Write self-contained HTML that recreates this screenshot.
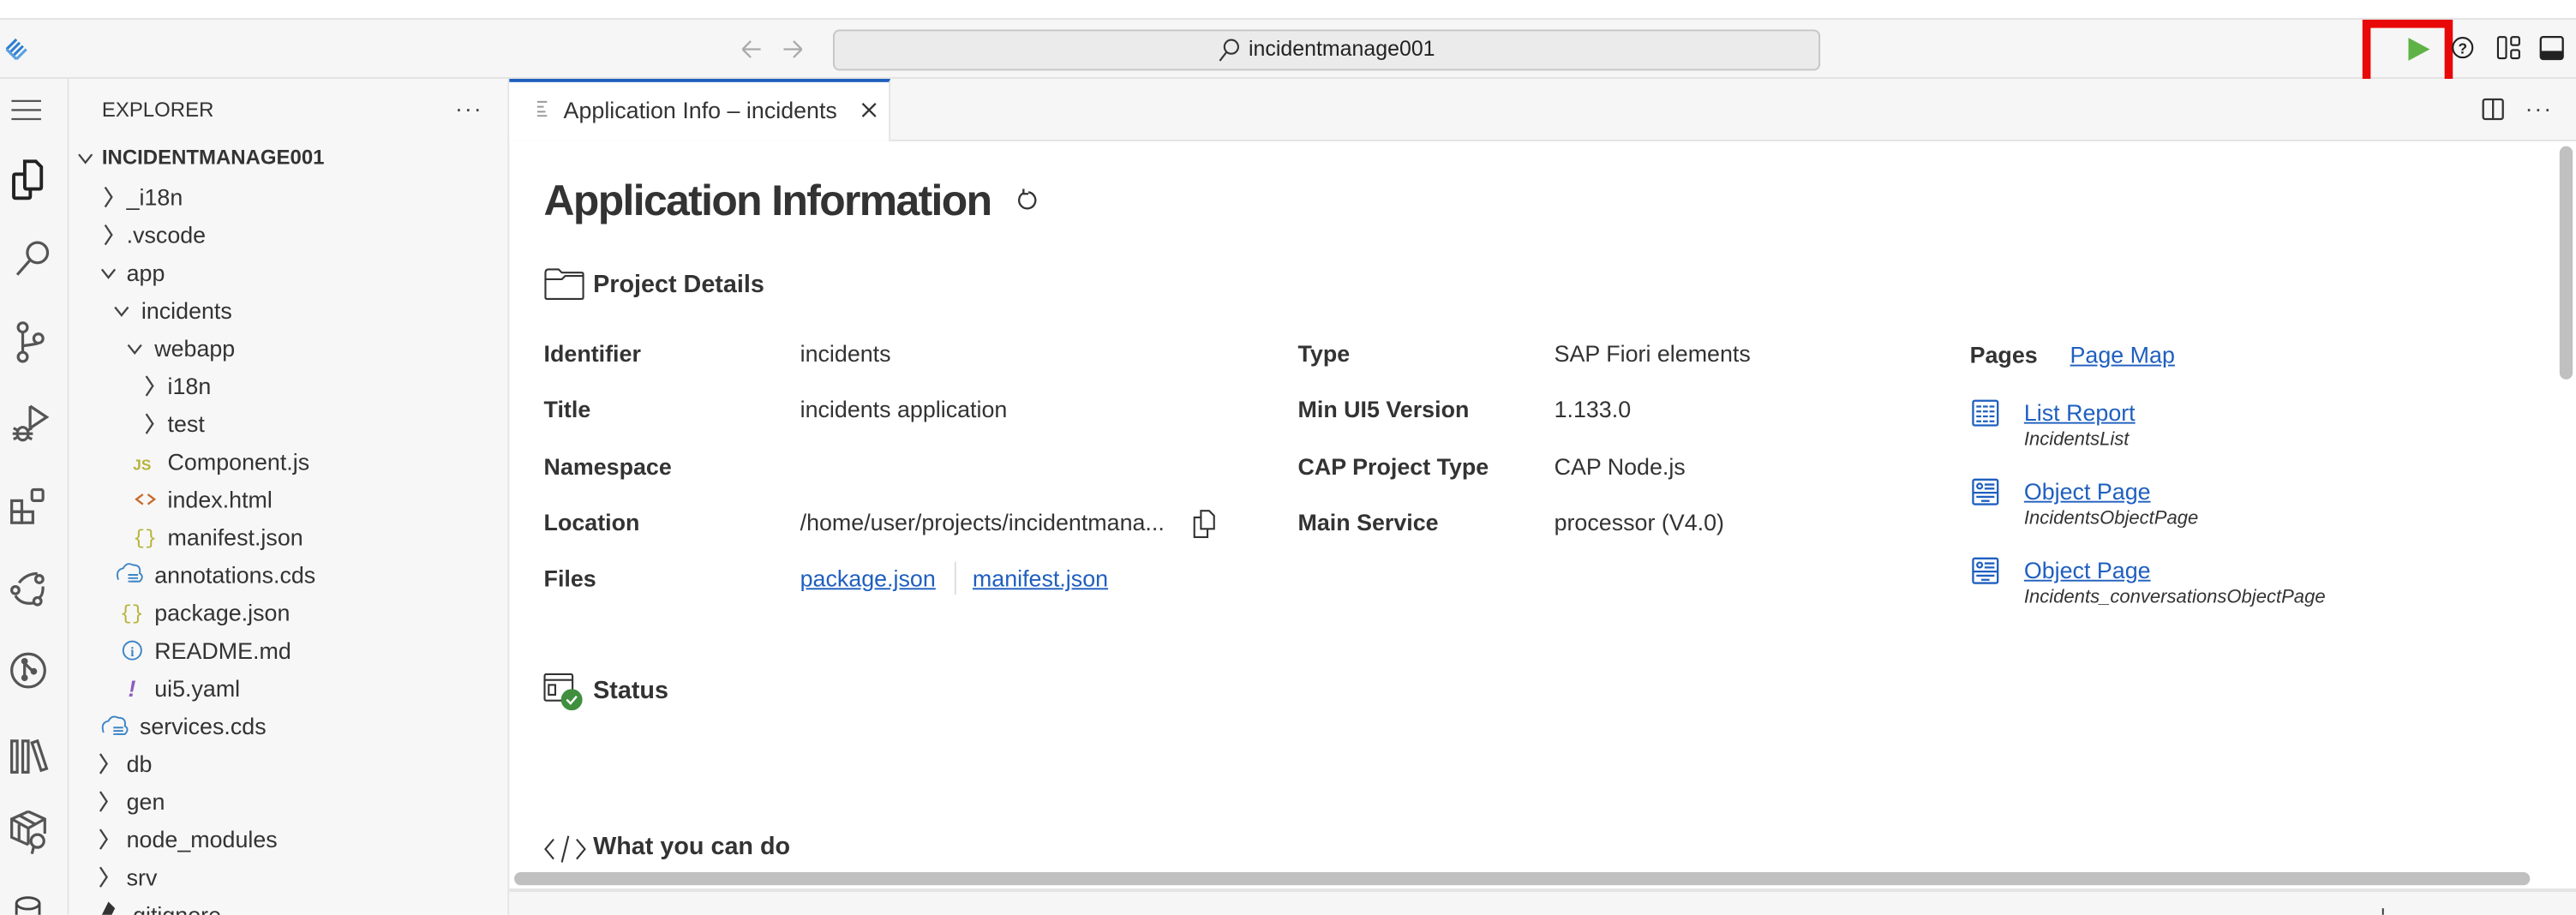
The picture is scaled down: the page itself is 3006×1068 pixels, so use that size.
<!DOCTYPE html>
<html><head><meta charset="utf-8">
<style>
html,body{margin:0;padding:0;width:3006px;height:1068px;overflow:hidden;background:#fff}
#w{position:absolute;left:0;top:0;width:1568px;height:557px;transform:scale(1.91709);transform-origin:0 0;font-family:"Liberation Sans",sans-serif;color:#333;overflow:hidden}
.a{position:absolute;white-space:nowrap}
.t{position:absolute;white-space:nowrap;font-size:14px;line-height:18px;color:#333}
.lb{position:absolute;white-space:nowrap;font-size:14px;font-weight:bold;line-height:18px;color:#333}
.v{position:absolute;white-space:nowrap;font-size:14px;line-height:18px;color:#333}
.lk{color:#1f5fbf;text-decoration:underline}
svg{position:absolute;overflow:visible}
</style></head><body><div id="w">
<div class="a" style="left:0;top:0;width:1568px;height:11px;background:#fff;border-bottom:1px solid #e2e2e2"></div>
<div class="a" style="left:0;top:12px;width:1568px;height:35px;background:#f6f6f6;border-bottom:1px solid #e2e2e2"></div>
<svg style="left:2px;top:21px" width="18" height="18" viewBox="0 0 18 18"><g stroke="#2f7fd0" stroke-width="1.6" fill="none"><path d="M2 9 L8 3 M4 11 L10 5 M6 13 L12 7"/><path d="M8 15 L14 9 M2 9 L8 15" stroke="#5aa0e0"/></g></svg>
<svg style="left:450px;top:23px" width="40" height="14"><g stroke="#aaa" stroke-width="1.2" fill="none"><path d="M2 7 H13 M2 7 L7 2 M2 7 L7 12"/><path d="M27 7 H38 M38 7 L33 2 M38 7 L33 12"/></g></svg>
<div class="a" style="left:507px;top:18px;width:599px;height:23px;background:#ebebeb;border:1px solid #c6c6c6;border-radius:4px"></div>
<svg style="left:741px;top:23px" width="14" height="15"><circle cx="8.5" cy="5.5" r="4.2" stroke="#333" stroke-width="1.1" fill="none"/><path d="M5.5 8.8 L1.5 14" stroke="#333" stroke-width="1.1"/></svg>
<div class="a" style="left:760px;top:22px;font-size:13px;line-height:16px;color:#222">incidentmanage001</div>
<div class="a" style="left:1438px;top:12px;width:45px;height:32px;border:5px solid #e80808"></div>
<svg style="left:1466px;top:23px" width="13" height="14"><path d="M0 0 L13 7 L0 14Z" fill="#5fb246"/></svg>
<svg style="left:1492px;top:22px" width="14" height="14"><circle cx="7" cy="7" r="6" stroke="#222" stroke-width="1.1" fill="none"/><text x="7" y="10.5" font-size="9" font-weight="bold" text-anchor="middle" fill="#222" font-family="Liberation Sans">?</text></svg>
<svg style="left:1520px;top:22px" width="15" height="15"><g stroke="#222" stroke-width="1.1" fill="none"><rect x="0.5" y="0.5" width="5" height="13" rx="1"/><rect x="8.5" y="0.5" width="5" height="5" rx="1"/><rect x="8.5" y="8.5" width="5" height="5" rx="1"/></g></svg>
<svg style="left:1546px;top:22px" width="15" height="15"><rect x="0.5" y="0.5" width="13.5" height="13.5" rx="1.5" stroke="#222" stroke-width="1.2" fill="none"/><rect x="0.5" y="9" width="13.5" height="5" fill="#222"/></svg>

<div class="a" style="left:0;top:48px;width:41px;height:509px;background:#f6f6f6;border-right:1px solid #e4e4e4"></div>
<svg style="left:7px;top:60px" width="20" height="14"><g stroke="#555" stroke-width="1.2"><path d="M0 1.5H18M0 7H18M0 12.5H18"/></g></svg>
<svg style="left:5px;top:96px" width="24" height="28"><g stroke="#222" stroke-width="1.8" fill="none" transform="scale(1.12)"><path d="M9 2 H15 L18 5 V16 Q18 17 17 17 H10 Q9 17 9 16Z"/><path d="M9 9 H4 Q3 9 3 10 V21 Q3 22 4 22 H11 Q12 22 12 21 V17"/></g></svg>
<svg style="left:6px;top:146px" width="24" height="26"><g stroke="#555" stroke-width="1.5" fill="none" transform="scale(1.12)"><circle cx="15" cy="7" r="5.5"/><path d="M11 11 L4 19"/></g></svg>
<svg style="left:6px;top:196px" width="24" height="28"><g stroke="#555" stroke-width="1.5" fill="none" transform="scale(1.12)"><circle cx="7" cy="3" r="2.5"/><circle cx="7" cy="19" r="2.5"/><circle cx="15.5" cy="9" r="2.5"/><path d="M7 5.5 V16.5 M7 13 Q15 12 15.5 11.5"/></g></svg>
<svg style="left:6px;top:245px" width="26" height="26"><g stroke="#555" stroke-width="1.5" fill="none" transform="scale(1.12)"><path d="M11 2 V14 M11 2 L20 8 L11 14"/><ellipse cx="7" cy="17" rx="3" ry="3.5"/><path d="M2 14 L4 15 M2 20 L4 19 M12 14 L10 15 M12 20 L10 19 M1.5 17 H12.5"/></g></svg>
<svg style="left:6px;top:297px" width="24" height="24"><g stroke="#555" stroke-width="1.5" fill="none" transform="scale(1.12)"><rect x="1" y="7" width="5.5" height="6"/><rect x="1" y="13" width="5.5" height="6"/><rect x="6.5" y="13" width="6" height="6"/><rect x="12" y="1" width="6" height="6" rx="1"/></g></svg>
<svg style="left:6px;top:347px" width="24" height="24"><g stroke="#555" stroke-width="1.5" fill="none" transform="scale(1.12)"><path d="M5 7 Q9 2 15 2 M18 9 Q18 14 16 15 M13 18 Q6 19 3 14"/><circle cx="16" cy="5" r="2"/><circle cx="3" cy="11" r="2"/><circle cx="15" cy="17" r="2"/></g></svg>
<svg style="left:6px;top:397px" width="24" height="24"><g transform="scale(1.12)"><g stroke="#555" stroke-width="1.5" fill="none"><circle cx="10" cy="10" r="9"/><path d="M8 5 V14 M8 6 L12 10"/></g><circle cx="8" cy="5" r="1.8" fill="#555"/><circle cx="8" cy="14" r="1.8" fill="#555"/><circle cx="13" cy="10.5" r="1.8" fill="#555"/></g></svg>
<svg style="left:6px;top:450px" width="24" height="22"><g stroke="#555" stroke-width="1.5" fill="none" transform="scale(1.12)"><rect x="1" y="1" width="3" height="17"/><rect x="7" y="1" width="3" height="17"/><path d="M12 2 L15 1 L20 16 L17 17Z"/></g></svg>
<svg style="left:6px;top:493px" width="24" height="30"><g stroke="#555" stroke-width="1.5" fill="none" transform="scale(1.12)"><path d="M10 1 L19 5 V13 M10 1 L1 5 V15 L10 19 M1 5 L10 10 L19 5 M10 10 V19 M5 3 L14 8 M5 8 V17"/><circle cx="15" cy="17" r="3.5"/><path d="M13 20 L12 24"/></g></svg>
<svg style="left:9px;top:545px" width="18" height="12"><ellipse cx="8" cy="5" rx="7" ry="3.5" stroke="#444" stroke-width="1.5" fill="none"/><path d="M1 5 V12 M15 5 V12" stroke="#444" stroke-width="1.5"/></svg>

<div class="a" style="left:42px;top:48px;width:267px;height:509px;background:#f7f7f7;border-right:1px solid #e4e4e4"></div>
<div class="a" style="left:62px;top:60px;font-size:12.5px;color:#333">EXPLORER</div>
<div class="a" style="left:277px;top:58px;font-size:14px;color:#444;letter-spacing:1px">···</div>
<svg style="left:47px;top:93px" width="10" height="8"><path d="M1 1 L5 6 L9 1" stroke="#444" stroke-width="1.2" fill="none"/></svg>
<div class="a" style="left:62px;top:89px;font-size:12.5px;font-weight:bold;color:#333">INCIDENTMANAGE001</div>

<svg style="left:0;top:0" width="310" height="557"><g stroke="#444" stroke-width="1.2" fill="none">
<path d="M64 114 L68 120 L64 126"/><path d="M64 137 L68 143 L64 149"/><path d="M62 164 L66 169 L70 164"/>
<path d="M70 187 L74 192 L78 187"/><path d="M78 210 L82 215 L86 210"/>
<path d="M89 229 L93 235 L89 241"/><path d="M89 252 L93 258 L89 264"/>
<path d="M61 459 L65 465 L61 471"/><path d="M61 482 L65 488 L61 494"/><path d="M61 505 L65 511 L61 517"/><path d="M61 528 L65 534 L61 540"/>
</g>
<text x="81" y="286" font-size="9" font-weight="bold" fill="#b6b43a" font-family="Liberation Sans">JS</text>
<path d="M87 301 L83 304 L87 307 M90 301 L94 304 L90 307" stroke="#c86a2a" stroke-width="1.2" fill="none"/>
<text x="81" y="331" font-size="12" fill="#b6b43a" font-family="Liberation Mono">{}</text>
<text x="73" y="377" font-size="12" fill="#b6b43a" font-family="Liberation Mono">{}</text>
<circle cx="80.5" cy="396" r="5.5" stroke="#3d85c6" stroke-width="1" fill="none"/><text x="80.5" y="399.5" font-size="8" text-anchor="middle" fill="#3d85c6" font-family="Liberation Serif" font-weight="bold">i</text>
<text x="78" y="424" font-size="14" font-style="italic" font-weight="bold" fill="#8e5bc0" font-family="Liberation Sans">!</text>
<g stroke="#3d85c6" stroke-width="1" fill="none"><path d="M72 353 Q70 347 75 346 Q77 342 81 344 Q86 344 85 349 Q88 351 85 354 H80"/><path d="M78 350 H84 M78 352 H84 M78 354 H84"/>
<path d="M63 446 Q61 440 66 439 Q68 435 72 437 Q77 437 76 442 Q79 444 76 447 H71"/><path d="M69 443 H75 M69 445 H75 M69 447 H75"/></g>
<path d="M62 557 L66 549 L70 553 L68 557Z" fill="#333"/>
</svg>
<div class="t" style="left:77px;top:111px">_i18n</div>
<div class="t" style="left:77px;top:134px">.vscode</div>
<div class="t" style="left:77px;top:157px">app</div>
<div class="t" style="left:86px;top:180px">incidents</div>
<div class="t" style="left:94px;top:203px">webapp</div>
<div class="t" style="left:102px;top:226px">i18n</div>
<div class="t" style="left:102px;top:249px">test</div>
<div class="t" style="left:102px;top:272px">Component.js</div>
<div class="t" style="left:102px;top:295px">index.html</div>
<div class="t" style="left:102px;top:318px">manifest.json</div>
<div class="t" style="left:94px;top:341px">annotations.cds</div>
<div class="t" style="left:94px;top:364px">package.json</div>
<div class="t" style="left:94px;top:387px">README.md</div>
<div class="t" style="left:94px;top:410px">ui5.yaml</div>
<div class="t" style="left:85px;top:433px">services.cds</div>
<div class="t" style="left:77px;top:456px">db</div>
<div class="t" style="left:77px;top:479px">gen</div>
<div class="t" style="left:77px;top:502px">node_modules</div>
<div class="t" style="left:77px;top:525px">srv</div>
<div class="t" style="left:77px;top:548px">.gitignore</div>

<div class="a" style="left:310px;top:48px;width:1258px;height:37px;background:#f6f6f6;border-bottom:1px solid #e4e4e4"></div>
<div class="a" style="left:310px;top:48px;width:232px;height:38px;background:#fff;border-top:2px solid #1f5fbf;border-right:1px solid #e4e4e4;box-sizing:border-box"></div>
<svg style="left:327px;top:61px" width="8" height="10"><g stroke="#999" stroke-width="1"><path d="M0 1H6M0 4H4M0 7H5M0 9.5H6"/></g></svg>
<div class="a" style="left:343px;top:59px;font-size:14px;color:#333">Application Info – incidents</div>
<svg style="left:524px;top:62px" width="10" height="10"><path d="M1 1 L9 9 M9 1 L1 9" stroke="#333" stroke-width="1.2"/></svg>
<svg style="left:1511px;top:60px" width="14" height="14"><rect x="0.5" y="0.5" width="12" height="12" rx="1.2" stroke="#333" stroke-width="1.2" fill="none"/><path d="M6.5 0.5 V12.5" stroke="#333" stroke-width="1.2"/></svg>
<div class="a" style="left:1537px;top:58px;font-size:14px;color:#444;letter-spacing:1px">···</div>

<div class="a" style="left:331px;top:107px;font-size:26px;font-weight:bold;color:#333;letter-spacing:-0.85px">Application Information</div>
<svg style="left:619px;top:115px" width="14" height="14"><path d="M4 2.5 A5 5 0 1 0 7 2" stroke="#333" stroke-width="1.2" fill="none"/><path d="M4 0 L4 3 L7 3" stroke="#333" stroke-width="1.2" fill="none"/></svg>
<svg style="left:331px;top:163px" width="26" height="20"><path d="M1 3 Q1 1 3 1 H9 L11 3 H23 Q24 3 24 4 V18 Q24 19 23 19 H2 Q1 19 1 18 Z M1 7 H11 L13 5 H24" stroke="#333" stroke-width="1.1" fill="none"/></svg>
<div class="a" style="left:361px;top:165px;font-size:15px;font-weight:bold;color:#333">Project Details</div>

<div class="lb" style="left:331px;top:206px">Identifier</div><div class="v" style="left:487px;top:206px">incidents</div>
<div class="lb" style="left:331px;top:240px">Title</div><div class="v" style="left:487px;top:240px">incidents application</div>
<div class="lb" style="left:331px;top:275px">Namespace</div>
<div class="lb" style="left:331px;top:309px">Location</div><div class="v" style="left:487px;top:309px">/home/user/projects/incidentmana...</div>
<svg style="left:725px;top:310px" width="16" height="18"><path d="M6 1 H11 L14 4 V12 H6 Z M6 5 H2 V17 H10 V12" stroke="#333" stroke-width="1.1" fill="none"/></svg>
<div class="lb" style="left:331px;top:343px">Files</div>
<div class="v" style="left:487px;top:343px"><span class="lk">package.json</span></div>
<div class="a" style="left:581px;top:342px;width:1px;height:20px;background:#ddd"></div>
<div class="v" style="left:592px;top:343px"><span class="lk">manifest.json</span></div>

<div class="lb" style="left:790px;top:206px">Type</div><div class="v" style="left:946px;top:206px">SAP Fiori elements</div>
<div class="lb" style="left:790px;top:240px">Min UI5 Version</div><div class="v" style="left:946px;top:240px">1.133.0</div>
<div class="lb" style="left:790px;top:275px">CAP Project Type</div><div class="v" style="left:946px;top:275px">CAP Node.js</div>
<div class="lb" style="left:790px;top:309px">Main Service</div><div class="v" style="left:946px;top:309px">processor (V4.0)</div>

<div class="lb" style="left:1199px;top:207px">Pages</div>
<div class="v" style="left:1260px;top:207px"><span class="lk">Page Map</span></div>
<svg style="left:1200px;top:243px" width="18" height="18"><g stroke="#1f5fbf" stroke-width="1.2" fill="none"><rect x="1" y="1" width="15" height="15" rx="1"/><path d="M3 4.5H14M3 7.5H14M3 10.5H14M3 13.5H14" stroke-dasharray="3 1"/></g></svg>
<div class="v" style="left:1232px;top:242px"><span class="lk">List Report</span></div>
<div class="a" style="left:1232px;top:262px;font-size:11.5px;font-style:italic;color:#333">IncidentsList</div>
<svg style="left:1200px;top:291px" width="18" height="18"><g stroke="#1f5fbf" stroke-width="1.2" fill="none"><rect x="1" y="1" width="15" height="15" rx="1"/><circle cx="5" cy="5" r="1.5"/><path d="M8 4H14M8 6.5H14M1 9H16M3 11.5H14M6 14H11" /></g></svg>
<div class="v" style="left:1232px;top:290px"><span class="lk">Object Page</span></div>
<div class="a" style="left:1232px;top:310px;font-size:11.5px;font-style:italic;color:#333">IncidentsObjectPage</div>
<svg style="left:1200px;top:339px" width="18" height="18"><g stroke="#1f5fbf" stroke-width="1.2" fill="none"><rect x="1" y="1" width="15" height="15" rx="1"/><circle cx="5" cy="5" r="1.5"/><path d="M8 4H14M8 6.5H14M1 9H16M3 11.5H14M6 14H11" /></g></svg>
<div class="v" style="left:1232px;top:338px"><span class="lk">Object Page</span></div>
<div class="a" style="left:1232px;top:358px;font-size:11.5px;font-style:italic;color:#333">Incidents_conversationsObjectPage</div>

<svg style="left:331px;top:410px" width="26" height="24"><g stroke="#333" stroke-width="1.1" fill="none"><rect x="0.5" y="0.5" width="17" height="16" rx="1"/><path d="M0.5 4 H17.5"/><rect x="3" y="7" width="4" height="6"/></g><circle cx="17" cy="16" r="6.5" fill="#3f8f3f"/><path d="M14 16 L16.3 18.3 L20 14" stroke="#fff" stroke-width="1.3" fill="none"/></svg>
<div class="a" style="left:361px;top:412px;font-size:15px;font-weight:bold;color:#333">Status</div>

<svg style="left:331px;top:508px" width="26" height="18"><path d="M6 3 L1 9 L6 15 M20 3 L25 9 L20 15 M15 1 L11 17" stroke="#333" stroke-width="1.1" fill="none"/></svg>
<div class="a" style="left:361px;top:507px;font-size:15px;font-weight:bold;color:#333">What you can do</div>

<div class="a" style="left:313px;top:531px;width:1227px;height:8px;background:#c0c0c0;border-radius:4px"></div>
<div class="a" style="left:1558px;top:89px;width:8px;height:142px;background:#c0c0c0;border-radius:4px"></div>
<div class="a" style="left:310px;top:541px;width:1258px;height:16px;background:#f6f6f6;border-top:2px solid #e4e4e4"></div>
<div class="a" style="left:1450px;top:553px;width:1px;height:4px;background:#333"></div>
</div></body></html>
